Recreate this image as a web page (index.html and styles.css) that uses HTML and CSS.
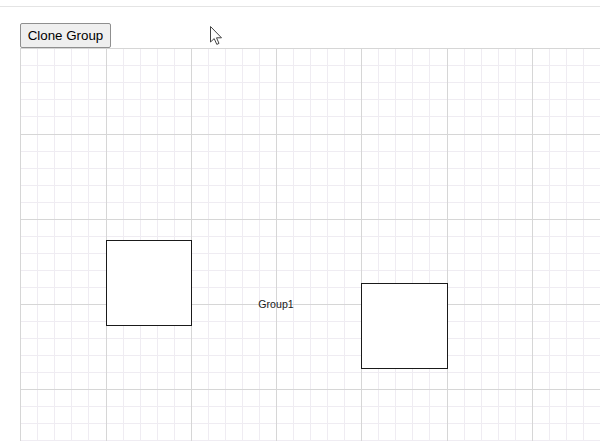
FILE: index.html
```html
<!DOCTYPE html>
<html>
<head>
<meta charset="utf-8">
<link rel="stylesheet" href="styles.css">
</head>
<body>
<div class="topbar"></div>
<div class="content">
  <div class="toolbar">
    <button class="btn" type="button">Clone Group</button>
  </div>
  <div class="diagram">
    <svg class="canvas" width="580" height="393" viewBox="0 0 580 393">
      <path class="minor" d="M17.5 0V393M34.5 0V393M51.5 0V393M68.5 0V393M103.5 0V393M120.5 0V393M137.5 0V393M154.5 0V393M188.5 0V393M205.5 0V393M222.5 0V393M239.5 0V393M273.5 0V393M290.5 0V393M307.5 0V393M324.5 0V393M358.5 0V393M375.5 0V393M392.5 0V393M409.5 0V393M444.5 0V393M461.5 0V393M478.5 0V393M495.5 0V393M529.5 0V393M546.5 0V393M563.5 0V393
      M0 17.5H580M0 34.5H580M0 51.5H580M0 68.5H580M0 103.5H580M0 120.5H580M0 137.5H580M0 154.5H580M0 188.5H580M0 205.5H580M0 222.5H580M0 239.5H580M0 273.5H580M0 290.5H580M0 307.5H580M0 324.5H580M0 358.5H580M0 375.5H580M0 392.5H580"/>
      <path class="major" d="M0.5 0V393M86.5 0V393M171.5 0V393M256.5 0V393M341.5 0V393M427.5 0V393M512.5 0V393
      M0 0.5H580M0 86.5H580M0 171.5H580M0 256.5H580M0 341.5H580"/>
      <rect class="node" x="86.5" y="192.5" width="85" height="85"/>
      <rect class="node" x="341.5" y="235.5" width="86" height="85"/>
      <text class="label" x="256" y="259.5" text-anchor="middle">Group1</text>
    </svg>
  </div>
</div>
<svg class="cursor" width="14" height="20" viewBox="0 0 14 20">
  <path d="M0.5 0.5V16L4.2 12.6L6.8 18.4L9 17.4L6.5 11.8H11.5Z"/>
</svg>
</body>
</html>
```

FILE: styles.css
```css
html, body {
  margin: 0;
  padding: 0;
  background: #ffffff;
  width: 600px;
  height: 441px;
  overflow: hidden;
}
.topbar {
  height: 6px;
  border-bottom: 1px solid #e4e4e4;
}
.content {
  padding: 16px 0 0 20px;
}
.toolbar {
  display: flex;
  height: 25px;
}
.btn {
  font-family: "Liberation Sans", Arial, sans-serif;
  font-size: 13.33px;
  color: #000;
  background: #efefef;
  border: 1px solid #8f8f8f;
  border-radius: 2px;
  padding: 0 6px;
  height: 25px;
  width: 91px;
  margin: 0;
  line-height: 23px;
  white-space: nowrap;
}
.diagram {
  width: 580px;
  height: 393px;
  overflow: hidden;
}
.canvas {
  display: block;
}
.minor {
  stroke: #efecf2;
  stroke-width: 1;
  fill: none;
  shape-rendering: crispEdges;
}
.major {
  stroke: #d6d6d6;
  stroke-width: 1;
  fill: none;
  shape-rendering: crispEdges;
}
.node {
  fill: #ffffff;
  stroke: #1a1a1a;
  stroke-width: 1;
  shape-rendering: crispEdges;
}
.label {
  font-family: "Liberation Sans", Arial, sans-serif;
  font-size: 10.6px;
  fill: #1a1a1a;
}
.cursor {
  position: absolute;
  left: 210px;
  top: 26px;
}
.cursor path {
  fill: #ffffff;
  stroke: #444444;
  stroke-width: 1;
  stroke-linejoin: round;
}
```
